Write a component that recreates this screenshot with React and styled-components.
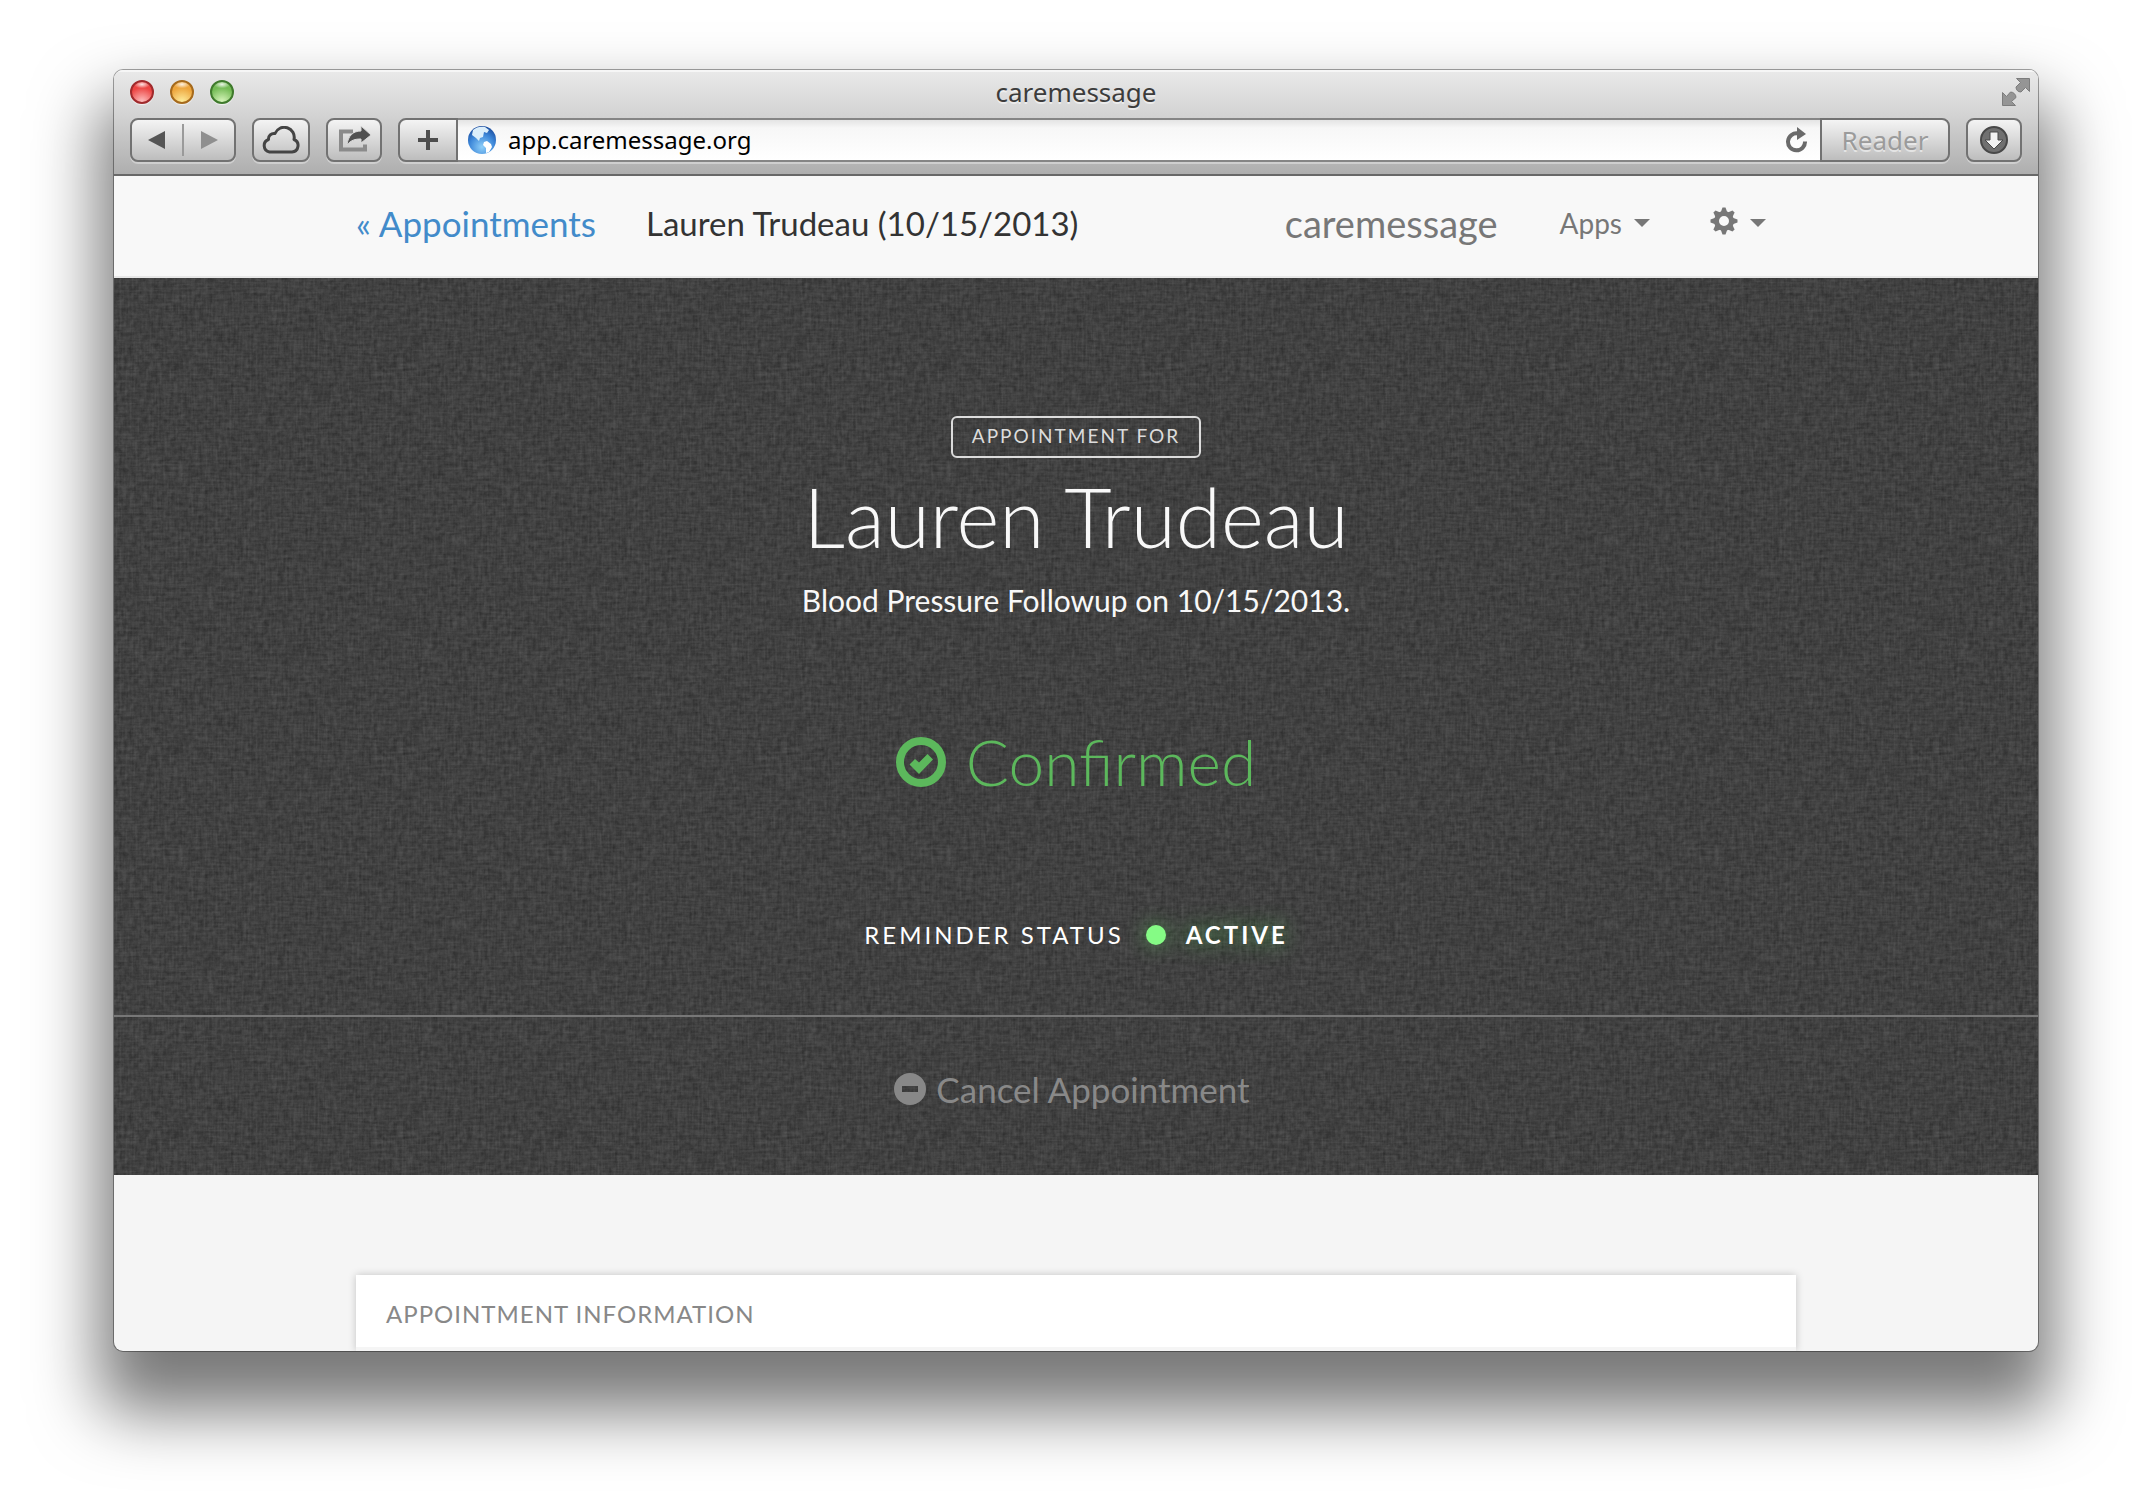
import React from "react";
import styled, { createGlobalStyle, css } from "styled-components";

const uiFont = `"Noto Sans", "Open Sans", sans-serif`;
const bodyFont = `Lato, "Open Sans", sans-serif`;

const linen = `url("data:image/svg+xml,${encodeURIComponent(
  `<svg xmlns='http://www.w3.org/2000/svg' width='384' height='384'>
  <filter id='n' x='0' y='0' width='100%' height='100%'><feTurbulence type='fractalNoise' baseFrequency='0.2 0.2' numOctaves='3' stitchTiles='stitch'/><feColorMatrix values='0 0 0 0 0  0 0 0 0 0  0 0 0 0 0  0.5 0 0 0 -0.14'/></filter>
  <filter id='v' x='0' y='0' width='100%' height='100%'><feTurbulence type='fractalNoise' baseFrequency='0.5 0.04' numOctaves='2' seed='4' stitchTiles='stitch'/><feColorMatrix values='0 0 0 0 1  0 0 0 0 1  0 0 0 0 1  0.12 0 0 0 -0.04'/></filter>
  <filter id='h' x='0' y='0' width='100%' height='100%'><feTurbulence type='fractalNoise' baseFrequency='0.04 0.5' numOctaves='2' seed='9' stitchTiles='stitch'/><feColorMatrix values='0 0 0 0 1  0 0 0 0 1  0 0 0 0 1  0.12 0 0 0 -0.04'/></filter>
  <rect width='384' height='384' filter='url(#n)'/><rect width='384' height='384' filter='url(#v)'/><rect width='384' height='384' filter='url(#h)'/></svg>`
)}")`;

const GlobalStyle = createGlobalStyle`
  *, *::before, *::after { box-sizing: border-box; }
  body { margin: 0; background: #fff; font-family: ${bodyFont}; color: #333; }
  button, input { font: inherit; color: inherit; margin: 0; }
  button { cursor: pointer; }
  h1, h2, p { margin: 0; font-weight: inherit; }
  a { text-decoration: none; color: inherit; }
  svg { display: block; flex: none; }
`;

const Desktop = styled.div`
  padding: 70px 114px 158px;
`;

const BrowserWindow = styled.div`
  border-radius: 9px;
  overflow: hidden;
  background: #f5f5f5;
  box-shadow: 0 0 0 1px rgba(0, 0, 0, 0.35), 0 46px 66px 15px rgba(0, 0, 0, 0.53);
`;

const Chrome = styled.header`
  font-family: ${uiFont};
  padding: 0 16px 12px;
  background: linear-gradient(#eaeaea, #d2d2d2 45%, #aeaeae);
  border-bottom: 2px solid #686868;
  box-shadow: inset 0 2px 0 #f6f6f6;
`;

const TitleBar = styled.div`
  display: grid;
  grid-template-columns: 1fr auto 1fr;
  align-items: center;
  height: 48px;
  padding-bottom: 4px;
`;

const Lights = styled.div`
  display: flex;
  gap: 16px;
`;

const Light = styled.button`
  width: 24px;
  height: 24px;
  padding: 0;
  border: 2px solid ${(p) => p.$rim};
  border-radius: 50%;
  background: radial-gradient(ellipse 8px 4px at 50% 12%, rgba(255, 255, 255, 0.85), transparent),
    radial-gradient(circle at 50% 100%, ${(p) => p.$glow}, ${(p) => p.$tone} 65%);
  box-shadow: 0 1px 1px rgba(255, 255, 255, 0.7);
`;

const WindowTitle = styled.div`
  font-size: 26px;
  line-height: 32px;
  color: #3c3c3c;
  text-shadow: 0 2px 0 rgba(255, 255, 255, 0.5);
`;

const Fullscreen = styled.button`
  justify-self: end;
  padding: 0;
  border: 0;
  background: none;
  margin-right: -8px;
`;

const Toolbar = styled.div`
  display: flex;
  gap: 16px;
  height: 44px;
`;

const raised = css`
  background: linear-gradient(#f4f4f4, #bdbdbd);
  border: 2px solid #727272;
  box-shadow: 0 2px 0 rgba(255, 255, 255, 0.35);
`;

const ToolGroup = styled.div`
  ${raised}
  display: flex;
  align-items: center;
  border-radius: 8px;
  width: 106px;
`;

const HistoryButton = styled.button`
  flex: 1;
  height: 32px;
  padding: 0;
  border: 0;
  background: none;
  display: grid;
  place-items: center;
  & + & { border-left: 2px solid #9a9a9a; }
`;

const ToolButton = styled.button`
  ${raised}
  display: grid;
  place-items: center;
  width: ${(p) => (p.$wide ? 58 : 56)}px;
  padding: 0;
  border-radius: 8px;
`;

const AddressBar = styled.div`
  flex: 1;
  display: flex;
  min-width: 0;
`;

const AddButton = styled(ToolButton)`
  width: 60px;
  border-radius: 8px 0 0 8px;
`;

const AddressField = styled.label`
  flex: 1;
  min-width: 0;
  display: flex;
  align-items: center;
  gap: 12px;
  padding: 0 12px 0 8px;
  background: linear-gradient(#e4e4e4, #f7f7f7 8px, #fff);
  border: solid #858585;
  border-width: 2px 0;
  box-shadow: 0 2px 0 rgba(255, 255, 255, 0.35);
`;

const AddressInput = styled.input`
  flex: 1;
  min-width: 0;
  padding: 0;
  border: 0;
  outline: 0;
  background: none;
  font-size: 24px;
  line-height: 32px;
  color: #000;
`;

const PlainButton = styled.button`
  padding: 0;
  border: 0;
  background: none;
  display: flex;
  align-items: center;
  gap: 12px;
`;

const ReaderButton = styled.button`
  ${raised}
  width: 130px;
  padding: 0;
  border-radius: 0 8px 8px 0;
  font-size: 26px;
  line-height: 32px;
  color: #9b9b9b;
  text-shadow: 0 2px 0 rgba(255, 255, 255, 0.5);
`;

const Nav = styled.nav`
  background: #f8f8f8;
  border-bottom: 2px solid #e7e7e7;
`;

const Container = styled.div`
  width: 100%;
  max-width: 1440px;
  margin: 0 auto;
`;

const NavRow = styled(Container)`
  display: flex;
  align-items: center;
  height: 100px;
  padding: 0 30px 6px 0;
`;

const BackLink = styled.a`
  font-size: 35px;
  color: #428bca;
  margin-right: 50px;
`;

const PageTitle = styled.h1`
  font-size: 33px;
  font-weight: 400;
  flex: 1;
`;

const Brand = styled.a`
  font-size: 38px;
  color: #777;
`;

const NavMenus = styled.div`
  display: flex;
  gap: 60px;
  margin-left: 62px;
  font-size: 28px;
  color: #777;
`;

const Hero = styled.section`
  background: #404040 ${linen};
  color: #f8f8f8;
  text-align: center;
`;

const HeroBody = styled.div`
  display: flex;
  flex-direction: column;
  align-items: center;
  padding: 138px 0 64px;
`;

const Badge = styled.p`
  border: 2px solid #dcdcdc;
  border-radius: 6px;
  padding: 0 19px 2px;
  font-size: 19px;
  line-height: 36px;
  letter-spacing: 2px;
  text-transform: uppercase;
  color: #dcdcdc;
`;

const Patient = styled.h2`
  font-size: 82px;
  line-height: 96px;
  font-weight: 300;
  margin-top: 10px;
`;

const Reason = styled.p`
  font-size: 30px;
  line-height: 40px;
  margin-top: 16px;
`;

const Confirmation = styled.p`
  display: flex;
  align-items: center;
  gap: 20px;
  margin-top: 102px;
  font-size: 64px;
  line-height: 80px;
  font-weight: 300;
  color: #5cb85c;
`;

const Reminder = styled.p`
  display: flex;
  align-items: center;
  margin-top: 117px;
  font-size: 24px;
  line-height: 32px;
  letter-spacing: 3px;
  text-transform: uppercase;
  color: #fff;
`;

const StatusDot = styled.span`
  width: 20px;
  height: 20px;
  margin: 0 20px 0 22px;
  border-radius: 50%;
  background: #85fb85;
  box-shadow: 0 0 20px rgba(92, 220, 92, 0.5);
`;

const StatusValue = styled.strong`
  font-weight: 700;
  text-shadow: 0 0 20px rgba(92, 220, 92, 0.7);
`;

const HeroFooter = styled.div`
  display: flex;
  justify-content: center;
  padding: 48px 0 62px;
  border-top: 2px solid #777;
`;

const CancelButton = styled(PlainButton)`
  gap: 10px;
  padding-right: 8px;
  font-size: 35px;
  line-height: 48px;
  color: #888;
`;

const Details = styled.main`
  padding-top: 100px;
`;

const Card = styled(Container)`
  padding-bottom: 4px;
  background: #f5f5f5;
  box-shadow: 0 0 8px rgba(0, 0, 0, 0.2);
`;

const CardTitle = styled.h2`
  padding: 23px 30px 17px;
  background: #fff;
  font-size: 24px;
  line-height: 32px;
  letter-spacing: 1px;
  text-transform: uppercase;
  color: #888;
`;

const Caret = () => (
  <svg width="16" height="8" viewBox="0 0 16 8" fill="currentColor" aria-hidden="true">
    <path d="M0 0h16L8 8z" />
  </svg>
);

const Triangle = ({ flip, fill }) => (
  <svg width="18" height="18" viewBox="0 0 18 18" aria-hidden="true">
    <path d={flip ? "M1 0v18L18 9z" : "M17 0v18L0 9z"} fill={fill} />
  </svg>
);

const CloudIcon = () => (
  <svg width="40" height="28" viewBox="0 0 40 28" fill="none" stroke="#444" strokeWidth="3" strokeLinejoin="round" aria-hidden="true">
    <path d="M8.500 26h22.500a6.500 6.500 0 0 0 2-12.500 10 10 0 0 0-19-6 5.500 5.500 0 0 0-6.500 6 6.500 6.500 0 0 0 1 12.500z" />
  </svg>
);

const ShareIcon = () => (
  <svg width="34" height="28" viewBox="0 0 34 28" aria-hidden="true">
    <path d="M16 5.500H4V23.500h24v-5" fill="none" stroke="#8b8b8b" strokeWidth="4" />
    <path d="M24 0l10 9-10 8v-4c-6 0-10 1-14 6 1-9 6-14 14-14z" fill="#505050" stroke="#d8d8d8" strokeWidth="1" />
  </svg>
);

const PlusIcon = () => (
  <svg width="20" height="20" viewBox="0 0 20 20" fill="#4d4d4d" aria-hidden="true">
    <path d="M8 0h4v8h8v4h-8v8H8v-8H0V8h8z" />
  </svg>
);

const GlobeIcon = () => (
  <svg width="30" height="30" viewBox="0 0 30 30" aria-hidden="true">
    <defs>
      <radialGradient id="sea" cx="50%" cy="75%" r="75%">
        <stop offset="0" stopColor="#8fd0fa" />
        <stop offset="0.6" stopColor="#3c86d8" />
        <stop offset="1" stopColor="#1a4a9c" />
      </radialGradient>
    </defs>
    <circle cx="16" cy="15" r="14" fill="url(#sea)" />
    <path d="M7 5c3-3 8-4 12-3l4 3-2 3-3-1-1 5-3 1-1 3-3-3-4-3z" fill="#dbeefb" />
    <path d="M18 17l3-1 4 3 1 3-3 5-3 1v-5l-3-3z" fill="#fff" />
  </svg>
);

const ReloadIcon = () => (
  <svg width="22" height="26" viewBox="0 0 22 26" aria-hidden="true">
    <path d="M12 6.500a8.500 8.500 0 1 0 7 8" fill="none" stroke="#6a6a6a" strokeWidth="4" />
    <path d="M11 0l9 7-9 6z" fill="#6a6a6a" />
  </svg>
);

const DownloadIcon = () => (
  <svg width="28" height="28" viewBox="0 0 28 28" aria-hidden="true">
    <circle cx="14" cy="14" r="13" fill="#707070" stroke="#484848" strokeWidth="2" />
    <path d="M10 6h8v8h5l-9 9-9-9h5z" fill="#f2f2f2" stroke="#484848" />
  </svg>
);

const FullscreenIcon = () => (
  <svg width="28" height="28" viewBox="0 0 28 28" fill="#959595" stroke="#7c7c7c" aria-hidden="true">
    <path d="M14.500 0.500h13v13l-4-4-4.500 4.500c-3 0-5-2-5-5l4.500-4.500z" />
    <path d="M0.500 14.500l4 4 4-4.500c3 0 5.500 2.500 5.500 5.500l-4.500 4 4 4H0.500z" />
  </svg>
);

const Gear = styled.svg`
  margin-bottom: 4px;
`;

const GearIcon = () => (
  <Gear width="28" height="28" viewBox="0 0 28 28" fill="currentColor" aria-hidden="true">
    {[0, 45, 90, 135, 180, 225, 270, 315].map((turn) => (
      <path key={turn} d="M12.500 0.500h3l2 5.500h-7z" transform={`rotate(${turn} 14 14)`} />
    ))}
    <circle cx="14" cy="14" r="7.500" fill="none" stroke="currentColor" strokeWidth="5" />
  </Gear>
);

const ConfirmedIcon = () => (
  <svg width="50" height="50" viewBox="0 0 50 50" aria-hidden="true">
    <circle cx="25" cy="25" r="21" fill="none" stroke="currentColor" strokeWidth="8" />
    <path d="M13.500 27.500l5.500-5.500 4 3.500 8.500-8.500 5.500 5.500-14 14.500z" fill="currentColor" />
  </svg>
);

const RemoveIcon = () => (
  <svg width="32" height="32" viewBox="0 0 32 32" aria-hidden="true">
    <path fillRule="evenodd" d="M16 0a16 16 0 1 1 0 32 16 16 0 0 1 0-32zM8 13v6h16v-6z" fill="currentColor" />
  </svg>
);

export default function App() {
  return (
    <Desktop>
      <GlobalStyle />
      <BrowserWindow>
        <Chrome>
          <TitleBar>
            <Lights>
              <Light aria-label="Close" $rim="#a02a2c" $tone="#ec4543" $glow="#ffc4c4" />
              <Light aria-label="Minimize" $rim="#a66a1c" $tone="#eda53c" $glow="#fff0a0" />
              <Light aria-label="Zoom" $rim="#3f7a2c" $tone="#74bb55" $glow="#dcf8c0" />
            </Lights>
            <WindowTitle>caremessage</WindowTitle>
            <Fullscreen aria-label="Full screen">
              <FullscreenIcon />
            </Fullscreen>
          </TitleBar>
          <Toolbar>
            <ToolGroup>
              <HistoryButton aria-label="Back">
                <Triangle fill="#555" />
              </HistoryButton>
              <HistoryButton aria-label="Forward">
                <Triangle flip fill="#8f8f8f" />
              </HistoryButton>
            </ToolGroup>
            <ToolButton $wide aria-label="iCloud tabs">
              <CloudIcon />
            </ToolButton>
            <ToolButton aria-label="Share">
              <ShareIcon />
            </ToolButton>
            <AddressBar>
              <AddButton aria-label="Add bookmark">
                <PlusIcon />
              </AddButton>
              <AddressField>
                <GlobeIcon />
                <AddressInput aria-label="Address" defaultValue="app.caremessage.org" />
                <PlainButton aria-label="Reload">
                  <ReloadIcon />
                </PlainButton>
              </AddressField>
              <ReaderButton disabled>Reader</ReaderButton>
            </AddressBar>
            <ToolButton aria-label="Downloads">
              <DownloadIcon />
            </ToolButton>
          </Toolbar>
        </Chrome>

        <Nav>
          <NavRow>
            <BackLink href="#appointments">« Appointments</BackLink>
            <PageTitle>Lauren Trudeau (10/15/2013)</PageTitle>
            <Brand href="#home">caremessage</Brand>
            <NavMenus>
              <PlainButton>
                Apps <Caret />
              </PlainButton>
              <PlainButton aria-label="Settings">
                <GearIcon />
                <Caret />
              </PlainButton>
            </NavMenus>
          </NavRow>
        </Nav>

        <Hero>
          <HeroBody>
            <Badge>Appointment for</Badge>
            <Patient>Lauren Trudeau</Patient>
            <Reason>Blood Pressure Followup on 10/15/2013.</Reason>
            <Confirmation>
              <ConfirmedIcon />
              Confirmed
            </Confirmation>
            <Reminder>
              Reminder Status
              <StatusDot />
              <StatusValue>Active</StatusValue>
            </Reminder>
          </HeroBody>
          <HeroFooter>
            <CancelButton>
              <RemoveIcon />
              Cancel Appointment
            </CancelButton>
          </HeroFooter>
        </Hero>

        <Details>
          <Card>
            <CardTitle>Appointment Information</CardTitle>
          </Card>
        </Details>
      </BrowserWindow>
    </Desktop>
  );
}
